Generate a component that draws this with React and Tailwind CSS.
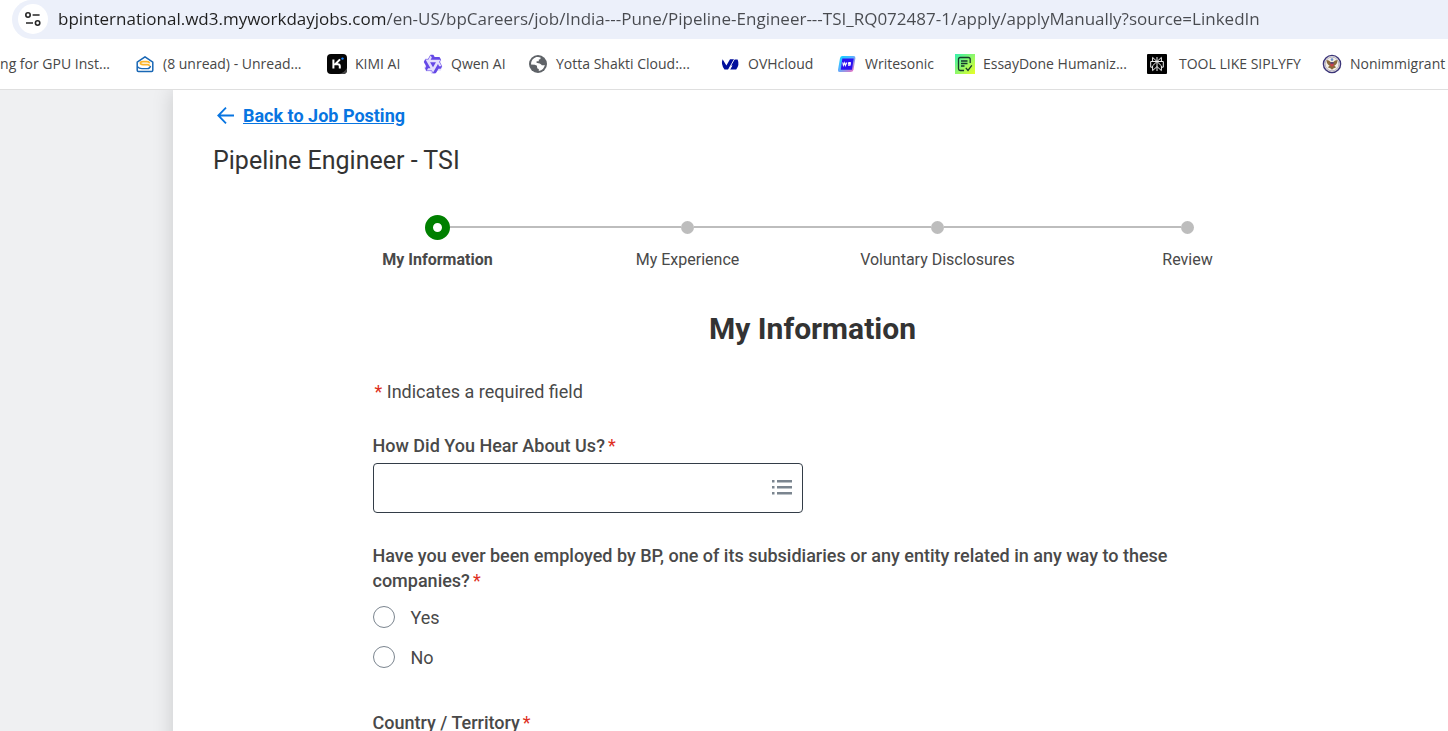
import { useState } from "react";

const bookmarks = [
  { label: "(8 unread) - Unread...", width: "w-48", Icon: MailIcon },
  { label: "KIMI AI", width: "w-24", Icon: KimiIcon },
  { label: "Qwen AI", width: "w-[105px]", Icon: QwenIcon },
  { label: "Yotta Shakti Cloud:...", width: "w-48", Icon: GlobeIcon },
  { label: "OVHcloud", width: "w-[117px]", Icon: OvhIcon },
  { label: "Writesonic", width: "w-[118px]", Icon: WritesonicIcon },
  { label: "EssayDone Humaniz...", width: "w-48", Icon: EssayIcon },
  { label: "TOOL LIKE SIPLYFY", width: "w-[175px]", Icon: PerplexityIcon, wide: true },
  { label: "Nonimmigrant", width: "w-48", Icon: SealIcon },
];

const steps = ["My Information", "My Experience", "Voluntary Disclosures", "Review"];

function MailIcon() {
  return (
    <svg viewBox="0 0 20 20" className="size-5 shrink-0" aria-hidden="true">
      <path d="M2.200 8.200v8q0 1.200 1.200 1.200h13.200q1.200 0 1.200-1.200v-8L10 2.800Z" fill="#fff" stroke="#1967b5" strokeWidth="1.500" strokeLinejoin="round" />
      <path d="M2.400 12.600q1.600 2 4.600 2h5.500q2.400 0 3-2.600" fill="none" stroke="#1967b5" strokeWidth="1.400" />
      <path d="M14.600 9.400q-.4-1.800-2.600-1.800H8q-2.600 0-2.600 1.500T8 10.700h4.500q1.500 0 2.300 1.200" fill="none" stroke="#fbb42a" strokeWidth="1.700" />
    </svg>
  );
}

function KimiIcon() {
  return (
    <svg viewBox="0 0 20 20" className="size-5 shrink-0" aria-hidden="true">
      <rect width="20" height="20" rx="4" fill="#060606" />
      <path d="M12 20q5-1 8-6v2q0 4-4 4Z" fill="#444" />
      <path d="M6.400 5.400v9.200M13 5.400l-4.800 4.900h2.600q2 0 2 2v2.300" fill="none" stroke="#fff" strokeWidth="2" />
      <circle cx="15.500" cy="4.600" r="1.200" fill="#1783ff" />
    </svg>
  );
}

function QwenIcon() {
  return (
    <svg viewBox="0 0 24 24" className="size-5 shrink-0" aria-hidden="true">
      <path d="M8.500 1.500h4l1.500 2.500h6l2 4-1.500 3.500 2.700 4.500-2 4h-4l-3 4H10l-1.500-3H3.500L1.200 16.500 3 13 .8 8.500 3 5h3.500Z" fill="#e4dffd" />
      <path fill="#6549e6" d="M12.604 1.340c.393.69.784 1.382 1.174 2.075a.18.18 0 00.157.091h5.552c.174 0 .322.11.446.327l1.454 2.570c.19.337.24.478.024.837-.26.43-.513.864-.76 1.300l-.367.658c-.106.196-.223.280-.04.512l2.652 4.637c.172.301.111.494-.043.770-.437.785-.882 1.564-1.335 2.340-.159.272-.352.375-.68.370-.777-.016-1.552-.01-2.327.016a.099.099 0 00-.081.050 575.097 575.097 0 01-2.705 4.740c-.169.293-.38.363-.725.364-.997.003-2.002.004-3.017.002a.537.537 0 01-.465-.271l-1.335-2.323a.09.09 0 00-.083-.049H4.982c-.285.030-.553-.001-.805-.092l-1.603-2.770a.543.543 0 01-.002-.54l1.207-2.120a.198.198 0 000-.197 550.951 550.951 0 01-1.875-3.272l-.79-1.395c-.16-.31-.173-.496.095-.965.465-.813.927-1.625 1.387-2.436.132-.234.304-.334.584-.335a338.300 338.300 0 012.589-.001.124.124 0 00.107-.063l2.806-4.895a.488.488 0 01.422-.246c.524-.001 1.053 0 1.583-.006L11.704 1c.341-.003.724.032.9.340zm-3.432.403a.06.06 0 00-.052.030L6.254 6.788a.157.157 0 01-.135.078H3.253c-.056 0-.07.025-.041.074l5.810 10.156c.025.042.013.062-.034.063l-2.795.015a.218.218 0 00-.2.116l-1.320 2.310c-.044.078-.021.118.068.118l5.716.008c.046 0 .08.020.104.061l1.403 2.454c.046.081.092.082.139 0l5.006-8.760.783-1.382a.055.055 0 01.096 0l1.424 2.530a.122.122 0 00.107.062l2.763-.02a.04.04 0 00.035-.02.041.041 0 000-.04l-2.900-5.086a.108.108 0 010-.113l.293-.507 1.120-1.977c.024-.041.012-.062-.035-.062H9.200c-.059 0-.073-.026-.043-.077l1.434-2.505a.107.107 0 000-.114L9.225 1.774a.06.06 0 00-.053-.031zm6.290 8.020c.046 0 .058.020.034.060l-.832 1.465-2.613 4.585a.056.056 0 01-.05.029.058.058 0 01-.05-.029L8.498 9.841c-.02-.034-.01-.052.028-.054l.216-.012 6.722-.012z" />
    </svg>
  );
}

function GlobeIcon() {
  return (
    <svg viewBox="0 0 20 20" className="size-5 shrink-0" aria-hidden="true">
      <circle cx="10" cy="10" r="9" fill="#5f6368" />
      <path d="M3 10.500Q3 5 8.300 3.100q2.700-.6 4.500.6-.2 1.800-2 1.900v1.700H8.600V9q3.400-.2 4.600 1.500.5 1.300 3.600.6-.8 4.800-6 6v-2.200q-1.800-.2-1.800-2v-1.200q-1.400-1.100-6-1.200Z" fill="#fff" />
    </svg>
  );
}

function OvhIcon() {
  return (
    <svg viewBox="0 0 20 20" className="size-5 shrink-0" fill="#000e9c" aria-hidden="true">
      <path d="M2.600 5.200 6.400 11.600 10 5.200H14.300L8.500 15.400H4.500Q.6 10.400 2.600 5.200Z" />
      <path d="M17.600 5.400q2.200 5.200-1.400 10H10.200l2.300-4h-2.300l3.400-6Z" />
      <path d="M14.800 4.400 8.300 15.900" stroke="#fff" strokeWidth=".9" />
    </svg>
  );
}

function WritesonicIcon() {
  return (
    <svg viewBox="0 0 20 20" className="size-5 shrink-0" aria-hidden="true">
      <defs>
        <linearGradient id="writesonic-edge" x1="0" y1="0" x2="1" y2="1">
          <stop offset="0" stopColor="#00dcff" />
          <stop offset=".45" stopColor="#5ab0ff" />
          <stop offset="1" stopColor="#ff65b8" />
        </linearGradient>
      </defs>
      <path d="M5.500 2h11q2.200 0 1.900 2.200l-1.900 11.600Q16 18 13.500 18h-11Q.6 18 1 15.800L3 4.200Q3.400 2 5.500 2Z" fill="url(#writesonic-edge)" />
      <path d="M5.300 4.400h11.400l-1.700 11.400H3.800Z" fill="#2b10f0" />
      <path d="m5.800 8.400.6 3 1.300-2.600.7 2.600 1.500-3M13.800 8.600h-2l-.3 1.300h1.800l-.3 1.400h-2" fill="none" stroke="#fff" strokeWidth="1.100" />
    </svg>
  );
}

function EssayIcon() {
  return (
    <svg viewBox="0 0 20 20" className="size-5 shrink-0" aria-hidden="true">
      <defs>
        <linearGradient id="essay-fill" x1="0" y1="0" x2="1" y2="1">
          <stop offset="0" stopColor="#35f0ae" />
          <stop offset="1" stopColor="#eaff24" />
        </linearGradient>
      </defs>
      <rect width="20" height="20" fill="url(#essay-fill)" />
      <path d="M15.200 9V5.200q0-1.700-1.700-1.700H5.200q-1.700 0-1.700 1.700v9.600q0 1.700 1.700 1.700H9M6 7h6.500M6 9.500h6.500M6 12h3.500M10.800 13.800l2.200 2.600 3.800-5" fill="none" stroke="#16392b" strokeWidth="1.300" />
    </svg>
  );
}

function PerplexityIcon() {
  return (
    <svg viewBox="0 0 20 20" className="size-5 shrink-0" aria-hidden="true">
      <rect width="20" height="20" rx="1" fill="#000" />
      <path d="M10 3v14M10 7.500 5.600 3.400v4.100h8.800V3.400ZM10 7.500l-4.400 4.300v4.800L10 12.600l4.400 4v-4.800ZM5.600 13.200H3.700V7.500h12.600v5.700h-1.900" fill="none" stroke="#eee" strokeWidth="1" />
    </svg>
  );
}

function SealIcon() {
  return (
    <svg viewBox="0 0 20 20" className="size-5 shrink-0" aria-hidden="true">
      <circle cx="10" cy="10" r="8.600" fill="#f4efe6" stroke="#3a3478" strokeWidth="1.400" />
      <circle cx="10" cy="10" r="6.900" fill="none" stroke="#8a86a8" strokeWidth=".6" />
      <path d="M4.500 6q2.500.2 4.200 2h2.600q1.700-1.800 4.200-2 0 4.200-3.200 5.700l1.900 1.500-2.900 1.400-1.300 1.200-1.300-1.200-2.900-1.400 1.900-1.500Q4.500 10.200 4.500 6Z" fill="#8a6a3c" />
      <path d="M8.400 8.800h3.200v2.500L10 12.900l-1.600-1.600Z" fill="#c8424c" />
      <path d="M8.400 8.400h3.200v1.200H8.400Z" fill="#30418c" />
      <circle cx="10" cy="5.600" r="1.300" fill="#6a91cc" />
    </svg>
  );
}

function Required() {
  return <span className="ml-[3px] inline-block font-normal text-[#de2e21]">*</span>;
}

function AddressBar() {
  const [url, setUrl] = useState(
    "bpinternational.wd3.myworkdayjobs.com/en-US/bpCareers/job/India---Pune/Pipeline-Engineer---TSI_RQ072487-1/apply/applyManually?source=LinkedIn"
  );
  return (
    <div className="ml-3 flex h-[39px] items-center rounded-l-[20px] bg-[#ecf0fa] pb-0.5 pl-1.5">
      <button type="button" aria-label="View site information" className="flex size-[30px] shrink-0 items-center justify-center rounded-full bg-white">
        <svg viewBox="0 0 18 18" className="size-[18px]" fill="none" stroke="#262626" strokeWidth="1.600" aria-hidden="true">
          <circle cx="4" cy="5" r="2.200" />
          <path d="M8.600 5h7M2 13h7" />
          <circle cx="13.600" cy="13" r="2.200" />
        </svg>
      </button>
      <input
        type="text"
        aria-label="Address"
        value={url}
        onChange={(e) => setUrl(e.target.value)}
        className="ml-2.5 min-w-0 flex-1 bg-linear-to-r from-[#1f1f1f] from-[328px] to-[#484a4f] to-[328px] bg-clip-text text-[17px] leading-6 text-transparent outline-none"
      />
    </div>
  );
}

function BookmarksBar() {
  return (
    <nav aria-label="Bookmarks" className="flex h-[50px] items-center overflow-hidden whitespace-nowrap text-sm text-[#474747]">
      <a href="#gpu" className="flex w-[135px] shrink-0 justify-end pr-[25px]">ng for GPU Inst...</a>
      {bookmarks.map(({ label, width, Icon, wide }) => (
        <a key={label} href="#bookmark" className={`flex shrink-0 items-center ${wide ? "gap-3" : "gap-2"} ${width}`}>
          <Icon />
          {label}
        </a>
      ))}
    </nav>
  );
}

function Stepper() {
  return (
    <ol className="mx-auto mt-7 flex w-full max-w-[1000px]">
      {steps.map((label, i) => (
        <li key={label} aria-current={i === 0 ? "step" : undefined} className="flex flex-1 flex-col items-center">
          <div className="flex h-[26px] w-full items-center">
            <span className={`h-0.5 flex-1 ${i === 0 ? "" : "bg-[#bdbdbd]"}`} />
            {i === 0 ? (
              <span className="size-[25px] rounded-full border-8 border-[#008000] bg-white" />
            ) : (
              <span className="size-[13px] rounded-full bg-[#bdbdbd]" />
            )}
            <span className={`h-0.5 flex-1 ${i === steps.length - 1 ? "" : "bg-[#bdbdbd]"}`} />
          </div>
          <span className={`mt-2 text-base leading-6 ${i === 0 ? "font-bold" : ""}`}>{label}</span>
        </li>
      ))}
    </ol>
  );
}

function Radio({ label }) {
  return (
    <label className="flex h-10 items-center gap-4">
      <input type="radio" name="employed" className="size-[22px] appearance-none rounded-full border border-[#7b858f] bg-white checked:border-[7px] checked:border-[#0875e1]" />
      <span>{label}</span>
    </label>
  );
}

export default function App() {
  return (
    <div className="flex h-screen flex-col overflow-hidden bg-white font-['Open_Sans',sans-serif]">
      <header className="shrink-0 border-b border-[#dfdfdf]">
        <AddressBar />
        <BookmarksBar />
      </header>
      <div className="min-h-0 flex-1 overflow-hidden bg-[#eff0f2] pl-[173px] font-['Roboto',sans-serif] text-lg leading-[25px] text-[#494949]">
        <main className="min-h-full bg-white pl-10 pr-9 pt-[13px] shadow-[0_0_20px_rgba(0,0,0,0.16)]">
          <a href="#posting" className="flex w-fit items-center gap-2 pl-1 font-bold text-[#0875e1]">
            <svg viewBox="0 0 18 18" className="size-[18px]" fill="none" stroke="currentColor" strokeWidth="1.800" aria-hidden="true">
              <path d="M17 8.500H1.500M9 .7 1.300 8.500 9 16.300" />
            </svg>
            <span className="underline">Back to Job Posting</span>
          </a>
          <h1 className="mt-2 text-[25px] leading-[50px] text-[#333]">
            Pipeline Engineer - TSI
          </h1>
          <Stepper />
          <form className="mx-auto max-w-[880px]" onSubmit={(e) => e.preventDefault()}>
            <h2 className="mt-[37px] text-center text-3xl font-bold leading-10 text-[#333]">My Information</h2>
            <p className="mt-[30px]"><span className="pl-0.5 text-[#de2e21]">*</span> Indicates a required field</p>
            <div className="mt-[29px]">
              <label htmlFor="source" className="block font-medium">How Did You Hear About Us?<Required /></label>
              <div className="mt-[5px] flex h-[50px] w-full max-w-[430px] items-center rounded border border-[#333d47] pr-[9px]">
                <input id="source" type="text" className="h-full min-w-0 flex-1 bg-transparent px-3 outline-none" />
                <button type="button" aria-label="Show options">
                  <svg viewBox="0 0 22 18" className="h-[18px] w-[22px]" fill="#7b858f" aria-hidden="true">
                    <path d="M1 1h2.500v2.500H1zM6 1h15v2.500H6zM1 7h2.500v2.500H1zM6 7h15v2.500H6zM1 13h2.500v2.500H1zM6 13h15v2.500H6z" />
                  </svg>
                </button>
              </div>
            </div>
            <fieldset className="mt-[30px]">
              <legend className="max-w-[830px] font-medium">
                Have you ever been employed by BP, one of its subsidiaries or any entity related in any way to these companies?<Required />
              </legend>
              <div className="pt-1">
                <Radio label="Yes" />
                <Radio label="No" />
              </div>
            </fieldset>
            <div className="mt-[33px]">
              <label htmlFor="country" className="block font-medium">Country / Territory<Required /></label>
              <select id="country" className="mt-[5px] h-[50px] w-full max-w-[430px] rounded border border-[#333d47] bg-white px-3" />
            </div>
          </form>
        </main>
      </div>
    </div>
  );
}
